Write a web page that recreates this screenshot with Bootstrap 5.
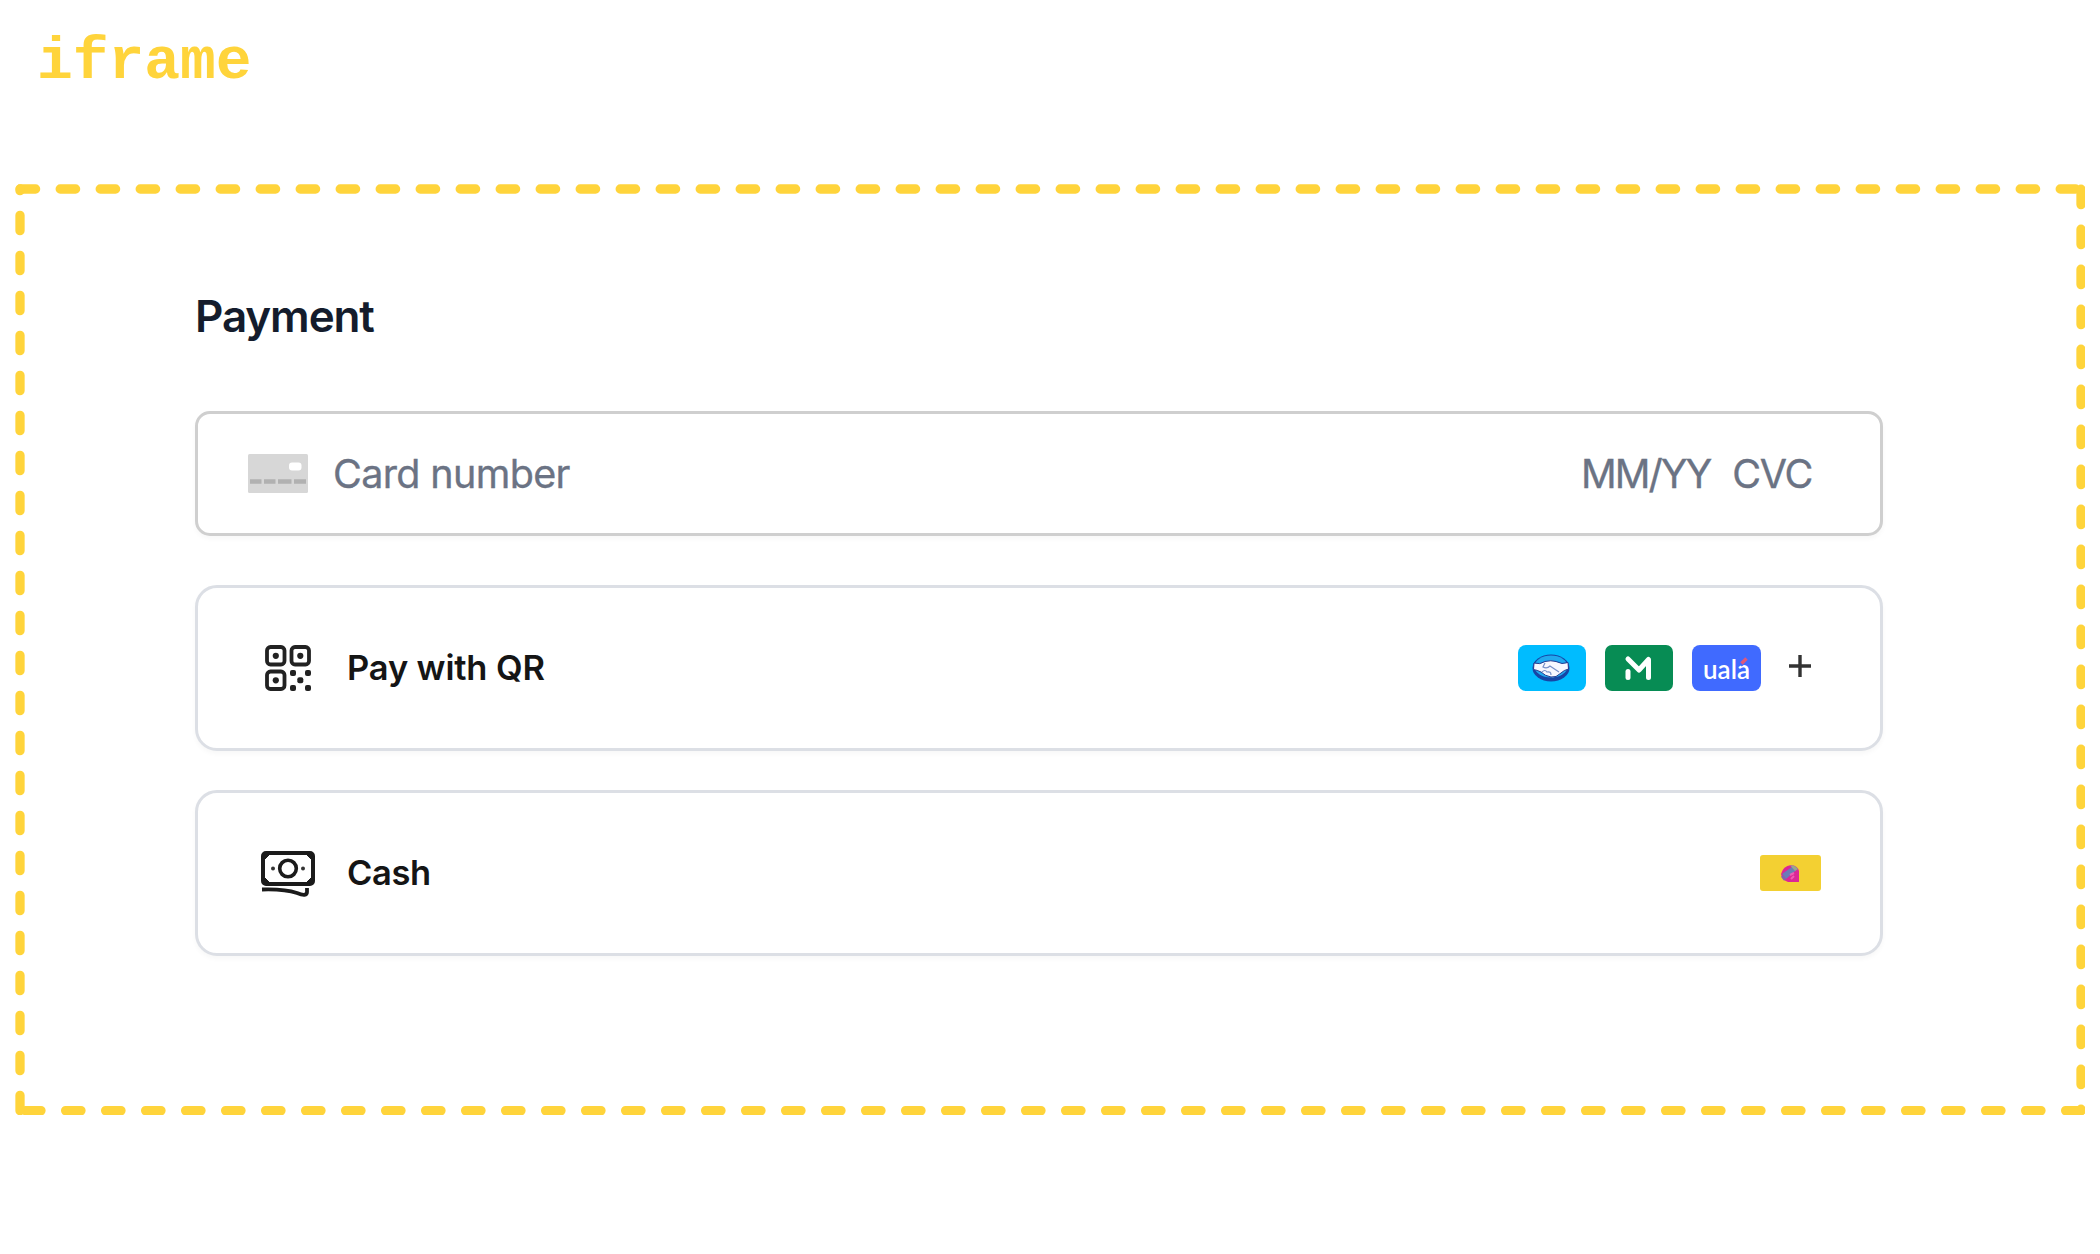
<!DOCTYPE html>
<html lang="en">
<head>
<meta charset="utf-8">
<meta name="viewport" content="width=device-width, initial-scale=1">
<title>Payment iframe</title>
<link href="https://cdn.jsdelivr.net/npm/bootstrap@5.3.0/dist/css/bootstrap.min.css" rel="stylesheet">
<style>
  body { font-family: Inter, "Liberation Sans", sans-serif; background: #fff; width: 2100px; height: 1254px; overflow: hidden; }
  .frame-label { font: 700 59.6px/60px "Liberation Mono", monospace; color: #ffd43b; padding: 32px 0 0 37px; height: 184px; }
  .frame { width: 2070px; height: 931px; margin-left: 15px; padding: 105px 202px 0 180px; }
  .dashes { inset: 0; }
  .pay-title { font-size: 44px; line-height: 54px; font-weight: 600; letter-spacing: -1.1px; color: #141c2c; margin: 0 0 68px; }
  .pay-box { background: #fff; border: 3px solid #dcdfe5; border-radius: 22px; height: 166px; box-shadow: 0 3px 5px rgba(0,0,0,.03); font-size: 34.5px; font-weight: 600; line-height: 42px; color: #151515; }
  .pay-field { border-color: #cfcfcf; border-radius: 15px; height: 125px; margin-bottom: 49px; padding: 0 68px 0 50px; font-size: 39.5px; font-weight: 400; line-height: 48px; color: #6b7384; }
  .pay-qr { margin-bottom: 39px; }
  .number-text { margin-left: 25px; letter-spacing: -.65px; -webkit-text-stroke: .35px; }
  .expiry-text { margin-right: 22px; letter-spacing: -2px; -webkit-text-stroke: .35px; }
  .cvc-text { letter-spacing: -1.3px; -webkit-text-stroke: .35px; }
  .qr-icon { margin-left: 67px; }
  .cash-icon { margin-left: 63px; margin-top: 2px; }
  .qr-text { margin-left: 36px; letter-spacing: -.15px; }
  .cash-text { margin-left: 32px; letter-spacing: -.4px; }
  .brands { margin-right: 69px; }
  .brand-gap { margin-left: 19px; }
  .plus-icon { margin-left: 28px; margin-top: -5px; }
  .cash-brand { margin-right: 59px; }
</style>
</head>
<body>
<div class="frame-label">iframe</div>
<main class="frame position-relative">
  <svg class="dashes position-absolute" width="2070" height="931" fill="none" stroke="#ffd43b" stroke-width="9.3" stroke-linecap="round" stroke-dasharray="15.4 24.6">
    <path d="M5.2 5H2066"/><path d="M2066 5.2V926.7"/><path d="M2066 926.6H5.2"/><path d="M5 926.7V5"/>
  </svg>
  <h1 class="pay-title">Payment</h1>

  <section class="pay-box pay-field d-flex align-items-center">
    <svg width="60" height="39" viewBox="0 0 60 39">
      <rect width="60" height="39" rx="1.5" fill="#d7d7d7"/>
      <rect x="41" y="8.5" width="12.5" height="8" rx="3" fill="#fff"/>
      <path d="M2 27.5H13.5M16 27.5H27.5M30 27.5H43.5M46 27.5H58" stroke="#b1b1b1" stroke-width="4.5"/>
    </svg>
    <span class="number-text">Card number</span>
    <span class="expiry-text ms-auto">MM/YY</span>
    <span class="cvc-text">CVC</span>
  </section>

  <section class="pay-box pay-qr d-flex align-items-center">
    <svg class="qr-icon" width="46" height="46" viewBox="0 0 46 46" fill="#222">
      <g fill="none" stroke="#222" stroke-width="3.8">
        <rect x="2" y="2" width="17.5" height="17.5" rx="3.5"/><rect x="26.5" y="2" width="17.5" height="17.5" rx="3.5"/><rect x="2" y="26.5" width="17.5" height="17.5" rx="3.5"/>
      </g>
      <g>
        <circle cx="10.8" cy="10.8" r="3.1"/><circle cx="35.3" cy="10.8" r="3.1"/><circle cx="10.8" cy="35.3" r="3.1"/>
        <rect x="25" y="25" width="6" height="6" rx="2"/><rect x="40" y="25" width="6" height="6" rx="2"/><rect x="32.3" y="32.3" width="6" height="6" rx="2"/><rect x="25" y="40" width="6" height="6" rx="2"/><rect x="40" y="40" width="6" height="6" rx="2"/>
      </g>
    </svg>
    <span class="qr-text">Pay with QR</span>
    <div class="brands d-flex align-items-center ms-auto">
      <svg width="68" height="46" viewBox="0 0 68 46">
        <rect width="68" height="46" rx="8" fill="#00bcff"/>
        <ellipse cx="33" cy="23" rx="18.5" ry="13.5" fill="#1645a5"/>
        <ellipse cx="33" cy="21.5" rx="16.5" ry="11" fill="#20a9ee"/>
        <path d="M16 18Q22 20 27 16.5Q33 15 38 16.5Q44 20 50 17.5L50.5 24Q46 25 43 28Q38 33 33 32Q27 31 23 27Q19 25 15.5 24.5Z" fill="#f7f8ff" stroke="#243b91" stroke-width="1"/>
        <path d="M27 18l-2 4q4 2 7-1l9 6M24 27q3-3 5 0q4-1 4 3" fill="none" stroke="#7790c8" stroke-width="1.2"/>
      </svg>
      <svg class="brand-gap" width="68" height="46" viewBox="0 0 68 46">
        <rect width="68" height="46" rx="7" fill="#078c54"/>
        <path d="M23 14L34 25L43.500 14.500V32.500" fill="none" stroke="#fff" stroke-width="5" stroke-linecap="round" stroke-linejoin="round"/>
        <path d="M23 26.500V32.500" stroke="#fff" stroke-width="5" stroke-linecap="round"/>
      </svg>
      <svg class="brand-gap" width="69" height="46" viewBox="0 0 69 46">
        <rect width="69" height="46" rx="8" fill="#406aff"/>
        <text x="11" y="34" textLength="47" lengthAdjust="spacingAndGlyphs" fill="#fff" font-family="Lato, sans-serif" font-size="26">ualá</text>
        <path d="M47.800 19L56 13" stroke="#406aff" stroke-width="6.500"/>
        <path d="M49.500 18.500L54.500 13.500" stroke="#e0587a" stroke-width="3.400"/>
      </svg>
      <svg class="plus-icon" width="22" height="22" viewBox="0 0 22 22" stroke="#333" stroke-width="3.4"><path d="M0 11H22M11 0V22"/></svg>
    </div>
  </section>

  <section class="pay-box d-flex align-items-center">
    <svg class="cash-icon" width="54" height="46" viewBox="0 0 54 46" fill="none" stroke="#1b1b1b">
      <rect x="2" y="2" width="50" height="31" rx="3" stroke-width="4"/>
      <path d="M3 3h6L3 9zM51 3h-6l6 6zM3 32h6l-6-6zM51 32h-6l6-6z" fill="#1b1b1b" stroke-width="1"/>
      <circle cx="27" cy="17.5" r="8.3" stroke-width="3.6"/>
      <circle cx="12" cy="17.5" r="2" fill="#333" stroke="none"/><circle cx="42" cy="17.5" r="2" fill="#333" stroke="none"/>
      <path d="M1 38.5C17 38 27 39 36 42Q46 46 46 41V37" stroke-width="3.8"/>
    </svg>
    <span class="cash-text">Cash</span>
    <svg class="cash-brand ms-auto" width="61" height="36" viewBox="0 0 61 36">
      <rect width="61" height="36" rx="3" fill="#f3d032"/>
      <path d="M21 19Q23 11 31 10Q38 11 39 16V27H28Q22 25 21 19Z" fill="#dc2697"/>
      <path d="M22 19L34 10.5L37.5 14L26 24Z" fill="#697cb8"/>
      <path d="M30 10.2Q35 10 38 14L35 16Z" fill="#98a78c"/>
      <path d="M22 21l3 4" stroke="#8065ad" stroke-width="2.5"/>
      <path d="M30 20l4-2M31 24l3-3" stroke="#f05ab5" stroke-width="2"/>
    </svg>
  </section>
</main>
<script src="https://cdn.jsdelivr.net/npm/bootstrap@5.3.0/dist/js/bootstrap.bundle.min.js"></script>
</body>
</html>
